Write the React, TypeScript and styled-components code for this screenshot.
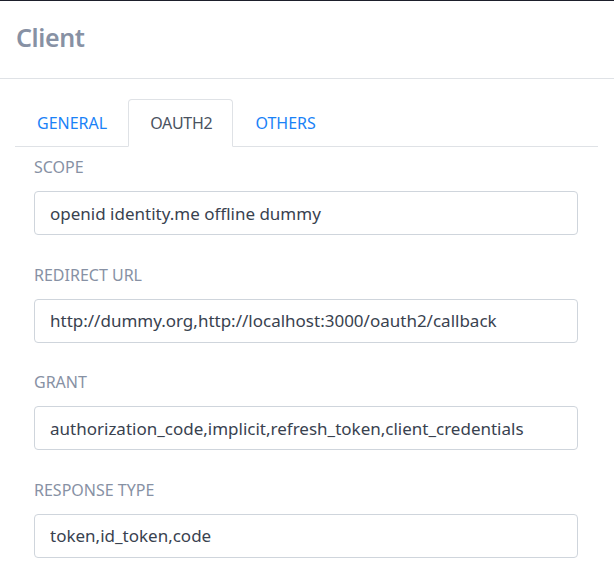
import * as React from 'react';
import styled, {createGlobalStyle} from 'styled-components';

const FONT = `"Noto Sans", "Open Sans", sans-serif`;

const GlobalStyle = createGlobalStyle`
    html, body {
        margin: 0;
        padding: 0;
        background: #ffffff;
        font-family: ${FONT};
    }

    * {
        box-sizing: border-box;
    }
`;

interface IField {
    label: string;
    value: string;
}

const fields: IField[] = [
    {label: 'Scope', value: 'openid identity.me offline dummy'},
    {label: 'Redirect URL', value: 'http://dummy.org,http://localhost:3000/oauth2/callback'},
    {label: 'Grant', value: 'authorization_code,implicit,refresh_token,client_credentials'},
    {label: 'Response type', value: 'token,id_token,code'},
];

const tabs = ['General', 'OAuth2', 'Others'];

const Page = styled.div`
    width: 614px;
    min-height: 562px;
    border-top: 1px solid #1d1f2b;
    background: #ffffff;
`;

const Header = styled.header`
    display: flex;
    align-items: center;
    height: 78px;
    padding: 0 16px 5px;
    border-bottom: 1px solid #dfe2e6;
`;

const Title = styled.h1`
    margin: 0;
    font-size: 25px;
    font-weight: 600;
    color: #8791a4;
    letter-spacing: -0.4px;
`;

const Body = styled.div`
    padding: 20px 16px 0 15px;
`;

const TabList = styled.nav`
    display: flex;
    border-bottom: 1px solid #dfe2e6;
`;

const Tab = styled.a<{$active?: boolean}>`
    display: block;
    margin-bottom: -1px;
    padding: 11px 20px 11px 21px;
    line-height: 24px;
    font-size: 16px;
    letter-spacing: ${p => p.$active ? '-0.3px' : '0'};
    text-transform: uppercase;
    text-decoration: none;
    cursor: pointer;
    color: ${p => p.$active ? '#4a5260' : '#1a82f7'};
    background: ${p => p.$active ? '#ffffff' : 'transparent'};
    border: 1px solid ${p => p.$active ? '#dfe2e6' : 'transparent'};
    border-bottom-color: ${p => p.$active ? '#ffffff' : 'transparent'};
    border-radius: 4px 4px 0 0;
`;

const Form = styled.div`
    display: flex;
    flex-direction: column;
    gap: 28.5px;
    padding: 9px 20px 0 19px;
`;

const Group = styled.div`
    display: flex;
    flex-direction: column;
    gap: 12px;
`;

const Label = styled.label`
    font-size: 16px;
    line-height: 23px;
    text-transform: uppercase;
    color: #8791a4;
`;

const Input = styled.input`
    height: 44px;
    width: 100%;
    padding: 0 15px;
    border: 1px solid #cfd5dc;
    border-radius: 4px;
    font-family: ${FONT};
    font-size: 17px;
    color: #39424f;
    background: #ffffff;
    outline: none;
`;

export default function App() {
    return (
        <Page>
            <GlobalStyle />
            <Header>
                <Title>Client</Title>
            </Header>
            <Body>
                <TabList>
                    {tabs.map(tab => (
                        <Tab key={tab} $active={tab === 'OAuth2'}>{tab}</Tab>
                    ))}
                </TabList>
                <Form>
                    {fields.map(field => (
                        <Group key={field.label}>
                            <Label>{field.label}</Label>
                            <Input readOnly value={field.value} />
                        </Group>
                    ))}
                </Form>
            </Body>
        </Page>
    );
}
